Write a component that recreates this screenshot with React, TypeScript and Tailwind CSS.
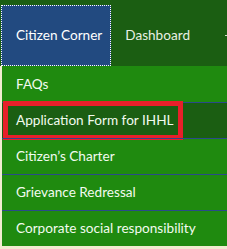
import React from 'react';

const ITEMS = ['FAQs', 'Application Form for IHHL', 'Citizen\u2019s Charter', 'Grievance Redressal', 'Corporate social responsibility'];

export default function App() {
  return (
    <div className="w-[227px] h-[249px] overflow-hidden bg-[#f1ecd0] text-[13.6px]" style={{ fontFamily: 'Lato, "Open Sans", sans-serif' }}>
      {/* Top nav */}
      <div className="h-[66px] bg-[#1b5e12] flex items-end whitespace-nowrap">
        <div className="ml-px w-[112px] h-[61px] bg-[#224a80] outline-1 outline-dotted outline-white -outline-offset-1 flex items-center pl-[15px] text-white">
          Citizen Corner
        </div>
        <div className="h-[61px] flex items-center pl-[14px] text-[#e8f0e4]">Dashboard</div>
        <div className="h-[61px] flex items-center pl-[35px]">
          <div className="w-[2px] h-px bg-[#cfe0c8]" />
        </div>
      </div>

      {/* Dropdown */}
      <div className="ml-[2px] bg-[#1f8a0f]">
        {ITEMS.map((label, i) => (
          <div key={label}
            className={`relative h-[36px] flex items-center pl-[14px] whitespace-nowrap text-[#f2fbef] ${i > 0 ? 'border-t border-[#2a4a8a]' : ''} ${i === 1 ? 'bg-[#1b5e12]' : ''}`}>
            {i === 1 && <div className="absolute left-px top-[-2px] w-[180px] h-[39px] border-[5px] border-[#e8202a]" />}
            <span className="relative">{label}</span>
          </div>
        ))}
      </div>
    </div>
  );
}
